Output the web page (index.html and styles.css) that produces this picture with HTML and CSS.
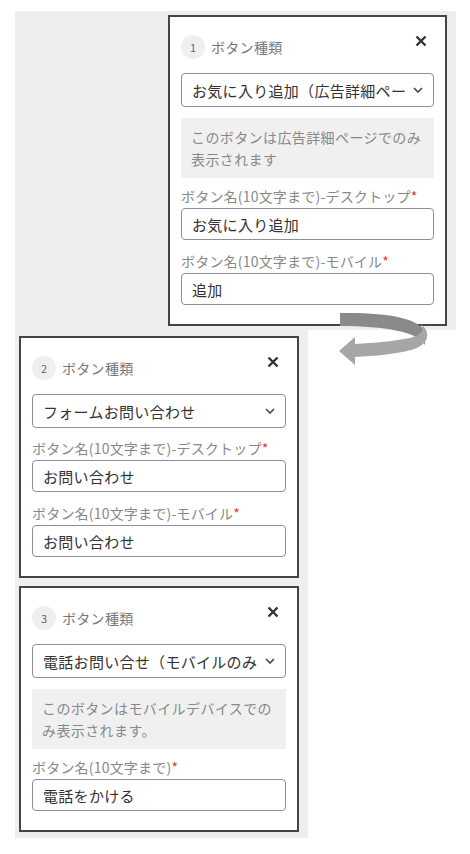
FILE: index.html
```html
<!DOCTYPE html>
<html lang="ja">
<head>
  <meta charset="UTF-8">
  <meta name="viewport" content="width=device-width, initial-scale=1.0">
  <title>ボタン種類設定</title>
  <link rel="stylesheet" href="styles.css">
</head>
<body>

<!-- Step 1 -->
<div class="top-area">
  <div class="panel">
    <div class="panel-head">
      <span class="step-no">1</span>
      <span class="step-title">ボタン種類</span>
      <svg class="close" viewBox="0 0 12 12"><path d="M1.5 1.5L10.5 10.5M10.5 1.5L1.5 10.5"/></svg>
    </div>
    <div class="select">
      <span class="select-text">お気に入り追加（広告詳細ペー</span>
      <svg class="chevron" viewBox="0 0 10 6"><path d="M1 1L5 5L9 1"/></svg>
    </div>
    <div class="notice">このボタンは広告詳細ページでのみ表示されます</div>
    <div class="field">
      <label>ボタン名(10文字まで)-デスクトップ<span class="req">*</span></label>
      <input type="text" value="お気に入り追加">
    </div>
    <div class="field">
      <label>ボタン名(10文字まで)-モバイル<span class="req">*</span></label>
      <input type="text" value="追加">
    </div>
  </div>

  <!-- curved arrow -->
  <svg class="arrow" viewBox="0 0 100 65">
    <path class="arrow-back" d="M5 5 C50 4 85 10 90 24 L90 37 C83 24 50 18 5 18 Z"/>
    <path class="arrow-front" d="M86 16 C96 24 95 37 76 42 C60 46 40 48 20 49 L20 57 L4 43 L20 29 L20 36 C40 35 60 33 75 30 C86 27 90 22 86 16 Z"/>
  </svg>
</div>

<!-- Step 2, 3 -->
<div class="bottom-area">
  <div class="panel">
    <div class="panel-head">
      <span class="step-no">2</span>
      <span class="step-title">ボタン種類</span>
      <svg class="close" viewBox="0 0 12 12"><path d="M1.5 1.5L10.5 10.5M10.5 1.5L1.5 10.5"/></svg>
    </div>
    <div class="select">
      <span class="select-text">フォームお問い合わせ</span>
      <svg class="chevron" viewBox="0 0 10 6"><path d="M1 1L5 5L9 1"/></svg>
    </div>
    <div class="field">
      <label>ボタン名(10文字まで)-デスクトップ<span class="req">*</span></label>
      <input type="text" value="お問い合わせ">
    </div>
    <div class="field">
      <label>ボタン名(10文字まで)-モバイル<span class="req">*</span></label>
      <input type="text" value="お問い合わせ">
    </div>
  </div>

  <div class="panel">
    <div class="panel-head">
      <span class="step-no">3</span>
      <span class="step-title">ボタン種類</span>
      <svg class="close" viewBox="0 0 12 12"><path d="M1.5 1.5L10.5 10.5M10.5 1.5L1.5 10.5"/></svg>
    </div>
    <div class="select">
      <span class="select-text">電話お問い合せ（モバイルのみ</span>
      <svg class="chevron" viewBox="0 0 10 6"><path d="M1 1L5 5L9 1"/></svg>
    </div>
    <div class="notice">このボタンはモバイルデバイスでのみ表示されます。</div>
    <div class="field">
      <label>ボタン名(10文字まで)<span class="req">*</span></label>
      <input type="text" value="電話をかける">
    </div>
  </div>
</div>

</body>
</html>
```

FILE: styles.css
```css
body {
  margin: 0;
  padding: 0;
  background-color: #fff;
  font-family: "Noto Sans CJK JP", "Noto Sans", sans-serif;
  color: #333;
}

/* Gray areas */
.top-area {
  position: relative;
  display: flex;
  margin: 11px 0 0 15px;
  width: 441px;
  padding: 4px 9px 4px 153px;
  box-sizing: border-box;
  background-color: #eeeeee;
}

.bottom-area {
  display: flex;
  flex-direction: column;
  gap: 8px;
  margin-left: 15px;
  width: 293px;
  padding: 6px 9px 6px 4px;
  box-sizing: border-box;
  background-color: #eeeeee;
}

/* Panel */
.panel {
  width: 280px;
  box-sizing: border-box;
  background-color: #fff;
  border: 2px solid #444;
  padding: 18px 11px 19px;
}

.panel-head {
  display: flex;
  align-items: flex-start;
  height: 24px;
}

.step-no {
  width: 24px;
  height: 24px;
  border-radius: 50%;
  background-color: #efefef;
  color: #666;
  font-size: 11px;
  line-height: 24px;
  text-align: center;
}

.step-title {
  margin-left: 6px;
  color: #777;
  font-size: 14px;
  letter-spacing: 0.3px;
  line-height: 24px;
}

.close {
  width: 12px;
  height: 12px;
  margin-left: auto;
  margin-right: 7px;
  fill: none;
  stroke: #333;
  stroke-width: 2.4;
}

/* Select */
.select {
  display: flex;
  align-items: center;
  height: 34px;
  margin-top: 14px;
  padding: 0 10px;
  box-sizing: border-box;
  border: 1px solid #8c8f94;
  border-radius: 4px;
  background-color: #fff;
}

.select-text {
  flex: 1;
  white-space: nowrap;
  font-size: 15px;
  letter-spacing: 0.3px;
  color: #333;
}

.chevron {
  width: 10px;
  height: 6px;
  margin-left: 4px;
  fill: none;
  stroke: #444;
  stroke-width: 1.6;
}

/* Notice */
.notice {
  margin-top: 11px;
  padding: 8px 10px;
  background-color: #f0f0f0;
  color: #888;
  font-size: 14px;
  letter-spacing: 0.4px;
  line-height: 22px;
}

/* Fields */
.select + .field {
  margin-top: 12px;
}

.notice + .field {
  margin-top: 10px;
}

.field + .field {
  margin-top: 13px;
}

.field label {
  display: block;
  color: #888;
  font-size: 14px;
  letter-spacing: 0.2px;
  line-height: 16px;
  margin-bottom: 4px;
}

.req {
  color: #e33;
}

.field input[type="text"] {
  display: block;
  width: 100%;
  height: 32px;
  box-sizing: border-box;
  padding: 0 10px;
  border: 1px solid #8c8f94;
  border-radius: 4px;
  font-family: inherit;
  font-size: 15px;
  letter-spacing: 0.3px;
  color: #333;
}

/* Arrow */
.arrow {
  position: absolute;
  left: 320px;
  top: 297px;
  width: 100px;
  height: 65px;
  overflow: visible;
}

.arrow-back {
  fill: #8a8a8a;
}

.arrow-front {
  fill: #a6a6a6;
}
```
